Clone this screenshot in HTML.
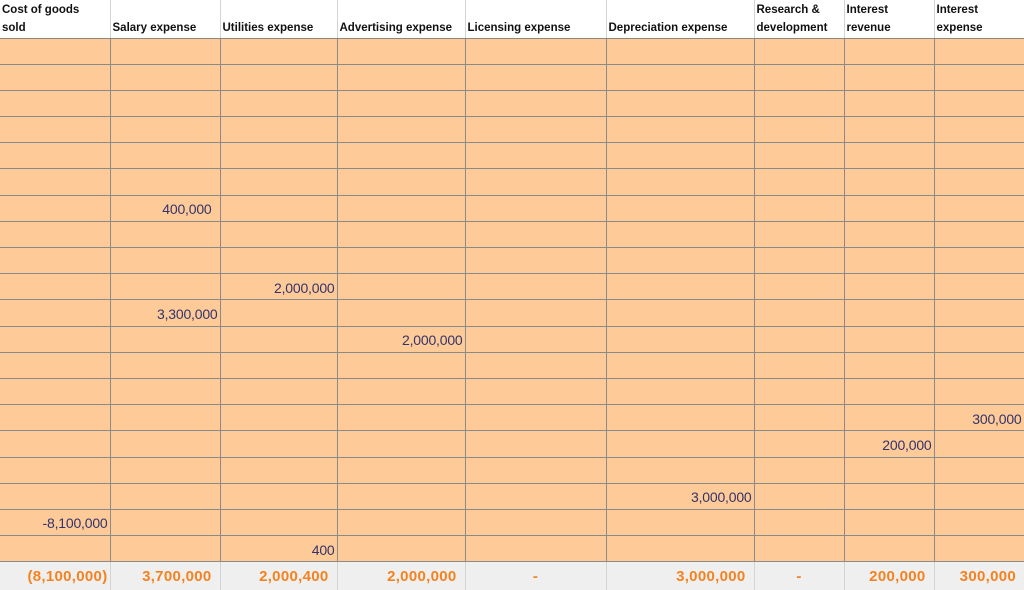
<!DOCTYPE html>
<html><head><style>
*{margin:0;padding:0;box-sizing:border-box}
body{width:1024px;height:590px;overflow:hidden;background:#fff;font-family:"Liberation Sans",sans-serif}
table{border-collapse:collapse;table-layout:fixed;width:1024px;position:absolute;left:0;top:0}
td{overflow:hidden;white-space:nowrap}
tr.h td{height:38px;font-weight:bold;font-size:11.5px;color:#111;vertical-align:bottom;padding:0 0 1px 2px;border-left:1px solid #d4d4d4;line-height:18px;border-bottom:1px solid #888}
tr.h td:first-child{border-left:none}
tr.r td{height:26.2px;background:#fecb98;border:1px solid #8a8a8a;text-align:right;font-size:14px;color:#33336b;padding:2px 2px 0 0;letter-spacing:-0.2px}
tr.r td:first-child{border-left:none}
tr.t td{height:28px;background:#efefef;border-left:1px solid #d4d4d4;text-align:right;font-size:15px;font-weight:bold;color:#f5821f;padding:0 8px 0 0;letter-spacing:0.3px}
tr.t td:first-child{border-left:none;padding-right:2px}
</style></head><body>
<table>
<colgroup><col style="width:110px"><col style="width:110px"><col style="width:117px"><col style="width:128px"><col style="width:141px"><col style="width:148px"><col style="width:90px"><col style="width:90px"><col style="width:90px"></colgroup>
<tr class="h"><td>Cost of goods<br>sold</td><td>Salary expense</td><td>Utilities expense</td><td>Advertising expense</td><td>Licensing expense</td><td>Depreciation expense</td><td>Research &amp;<br>development</td><td>Interest<br>revenue</td><td>Interest<br>expense</td></tr>
<tr class="r"><td></td><td></td><td></td><td></td><td></td><td></td><td></td><td></td><td></td></tr>
<tr class="r"><td></td><td></td><td></td><td></td><td></td><td></td><td></td><td></td><td></td></tr>
<tr class="r"><td></td><td></td><td></td><td></td><td></td><td></td><td></td><td></td><td></td></tr>
<tr class="r"><td></td><td></td><td></td><td></td><td></td><td></td><td></td><td></td><td></td></tr>
<tr class="r"><td></td><td></td><td></td><td></td><td></td><td></td><td></td><td></td><td></td></tr>
<tr class="r"><td></td><td></td><td></td><td></td><td></td><td></td><td></td><td></td><td></td></tr>
<tr class="r"><td></td><td style="padding-right:8px">400,000</td><td></td><td></td><td></td><td></td><td></td><td></td><td></td></tr>
<tr class="r"><td></td><td></td><td></td><td></td><td></td><td></td><td></td><td></td><td></td></tr>
<tr class="r"><td></td><td></td><td></td><td></td><td></td><td></td><td></td><td></td><td></td></tr>
<tr class="r"><td></td><td></td><td>2,000,000</td><td></td><td></td><td></td><td></td><td></td><td></td></tr>
<tr class="r"><td></td><td>3,300,000</td><td></td><td></td><td></td><td></td><td></td><td></td><td></td></tr>
<tr class="r"><td></td><td></td><td></td><td>2,000,000</td><td></td><td></td><td></td><td></td><td></td></tr>
<tr class="r"><td></td><td></td><td></td><td></td><td></td><td></td><td></td><td></td><td></td></tr>
<tr class="r"><td></td><td></td><td></td><td></td><td></td><td></td><td></td><td></td><td></td></tr>
<tr class="r"><td></td><td></td><td></td><td></td><td></td><td></td><td></td><td></td><td>300,000</td></tr>
<tr class="r"><td></td><td></td><td></td><td></td><td></td><td></td><td></td><td>200,000</td><td></td></tr>
<tr class="r"><td></td><td></td><td></td><td></td><td></td><td></td><td></td><td></td><td></td></tr>
<tr class="r"><td></td><td></td><td></td><td></td><td></td><td>3,000,000</td><td></td><td></td><td></td></tr>
<tr class="r"><td>-8,100,000</td><td></td><td></td><td></td><td></td><td></td><td></td><td></td><td></td></tr>
<tr class="r"><td></td><td></td><td>400</td><td></td><td></td><td></td><td></td><td></td><td></td></tr>
<tr class="t"><td>(8,100,000)</td><td>3,700,000</td><td>2,000,400</td><td>2,000,000</td><td style="text-align:center;padding:0">-</td><td>3,000,000</td><td style="text-align:center;padding:0">-</td><td>200,000</td><td>300,000</td></tr>
</table>
</body></html>
